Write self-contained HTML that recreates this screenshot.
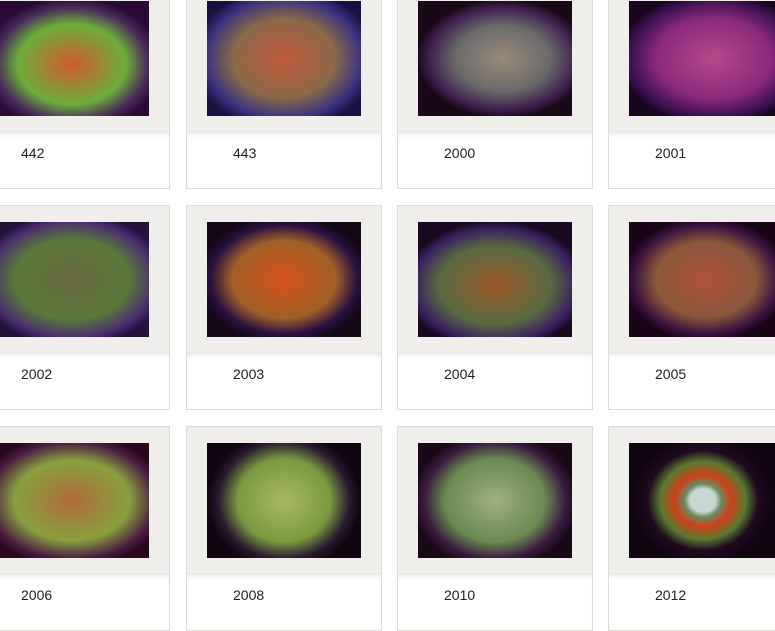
<!DOCTYPE html><html><head><style>
body{margin:0;width:775px;height:610px;overflow:hidden;background:#fff;position:relative;font-family:"Liberation Sans",Arial,sans-serif}
.c{position:absolute;width:196px;height:205px}
.g{position:absolute;left:0;top:0;width:194px;height:146px;background:#efeeea;border:1px solid #dcdcd8;border-bottom:1px solid #c9c9c5}
.l{position:absolute;left:0;top:147px;width:194px;height:57px;background:#fff;border:1px solid #dcdcd8;border-top:none;box-shadow:inset 0 6px 8px -6px #ccc}
.i{position:absolute;left:20px;top:16px;width:154px;height:115px;background:#1a0520}
.t{position:absolute;left:46px;top:14px;font-size:14px;color:#222}
</style></head><body>
<div class="c" style="left:-26px;top:-16px"><div class="g"><div class="i" style="background:radial-gradient(ellipse 58% 58% at 50% 55%,#d35a2e,#6cae3c 60%,#4a2a5a 85%,#2a0a35)"></div></div><div class="l"><div class="t">442</div></div></div>
<div class="c" style="left:186px;top:-16px"><div class="g"><div class="i" style="background:radial-gradient(ellipse 60% 62% at 50% 50%,#c0583a,#8a6a48 55%,#3a3080 85%,#1a1040)"></div></div><div class="l"><div class="t">443</div></div></div>
<div class="c" style="left:397px;top:-16px"><div class="g"><div class="i" style="background:radial-gradient(ellipse 56% 52% at 55% 50%,#9a8a7a,#6a6a6a 55%,#402050 85%,#180818)"></div></div><div class="l"><div class="t">2000</div></div></div>
<div class="c" style="left:608px;top:-16px"><div class="g"><div class="i" style="background:radial-gradient(ellipse 62% 58% at 55% 50%,#b84a8a,#8a2a7a 60%,#3a1050 88%,#1a0520)"></div></div><div class="l"><div class="t">2001</div></div></div>

<div class="c" style="left:-26px;top:205px"><div class="g"><div class="i" style="background:radial-gradient(ellipse 62% 58% at 50% 50%,#6a6a40,#5a7a3a 60%,#4a2a70 88%,#20103a)"></div></div><div class="l"><div class="t">2002</div></div></div>
<div class="c" style="left:186px;top:205px"><div class="g"><div class="i" style="background:radial-gradient(ellipse 56% 56% at 50% 50%,#d8501a,#a0602a 60%,#2a1040 85%,#150818)"></div></div><div class="l"><div class="t">2003</div></div></div>
<div class="c" style="left:397px;top:205px"><div class="g"><div class="i" style="background:radial-gradient(ellipse 60% 56% at 50% 55%,#9a5a2a,#5a6a40 60%,#3a2060 88%,#180820)"></div></div><div class="l"><div class="t">2004</div></div></div>
<div class="c" style="left:608px;top:205px"><div class="g"><div class="i" style="background:radial-gradient(ellipse 54% 54% at 50% 50%,#b05040,#8a5a3a 60%,#3a1040 88%,#1a0518)"></div></div><div class="l"><div class="t">2005</div></div></div>

<div class="c" style="left:-26px;top:426px"><div class="g"><div class="i" style="background:radial-gradient(ellipse 62% 58% at 50% 50%,#b06a3a,#8aa040 60%,#4a1a40 88%,#2a0820)"></div></div><div class="l"><div class="t">2006</div></div></div>
<div class="c" style="left:186px;top:426px"><div class="g"><div class="i" style="background:radial-gradient(ellipse 50% 60% at 50% 50%,#a8b860,#7a9a40 60%,#2a1a30 85%,#100510)"></div></div><div class="l"><div class="t">2008</div></div></div>
<div class="c" style="left:397px;top:426px"><div class="g"><div class="i" style="background:radial-gradient(ellipse 54% 60% at 50% 50%,#a0b080,#6a8a50 60%,#3a1a40 85%,#180818)"></div></div><div class="l"><div class="t">2010</div></div></div>
<div class="c" style="left:608px;top:426px"><div class="g"><div class="i" style="background:radial-gradient(ellipse 46% 56% at 48% 50%,#c8d8d0 18%,#6a8a60 26%,#d0401a 40%,#5a7a30 60%,#200a20 78%,#100510)"></div></div><div class="l"><div class="t">2012</div></div></div>
</body></html>
